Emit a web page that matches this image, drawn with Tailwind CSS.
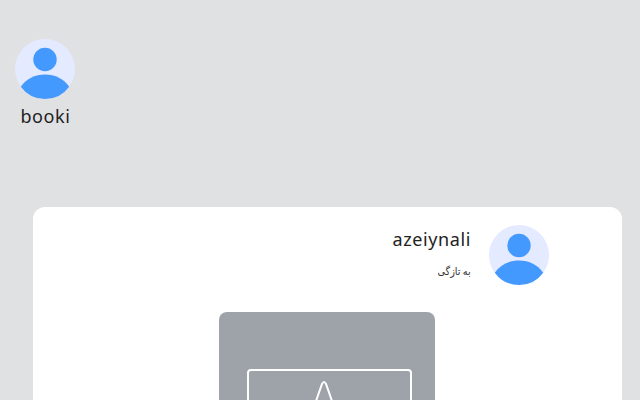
<!DOCTYPE html>
<html lang="fa">
<head>
<meta charset="utf-8">
<script src="https://cdn.jsdelivr.net/npm/@tailwindcss/browser@4"></script>
</head>
<body class="m-0 h-[400px] w-[640px] overflow-hidden bg-[#e0e1e3] font-['Noto_Sans','DejaVu_Sans',sans-serif] text-[#222]">
<div class="flex h-[207px] flex-col items-start pl-[15px] pt-[39px]">
  <div class="flex w-[60px] flex-col items-center">
    <svg class="size-[60px] shrink-0" viewBox="0 0 60 60"><circle cx="30" cy="30" r="30" fill="#e4eaff"/><circle cx="30" cy="20.5" r="11.7" fill="#4499ff"/><path d="M5.8 47.7C11 40 20 35.5 30 35.5S49 40 54.2 47.7A30 30 0 0 1 30 60A30 30 0 0 1 5.8 47.7Z" fill="#4499ff"/></svg>
    <span class="mt-[3px] ml-[1px] whitespace-nowrap text-[18px] leading-[28px] tracking-[0.6px]">booki</span>
  </div>
</div>
<div class="ml-[33px] h-[300px] w-[589px] overflow-hidden rounded-t-[12px] bg-white pt-[18px]">
  <div class="flex items-start justify-end pr-[73px]">
    <div class="mr-[18px] flex flex-col items-end">
      <span class="text-[18px] leading-[28px] whitespace-nowrap tracking-[0.6px]">azeiynali</span>
      <span dir="rtl" class="mt-[11px] origin-right scale-x-[.88] font-['DejaVu_Sans',sans-serif] text-[11px] leading-[16px] text-[#333] whitespace-nowrap [word-spacing:-1px]">به تازگی</span>
    </div>
    <svg class="size-[60px] shrink-0" viewBox="0 0 60 60"><circle cx="30" cy="30" r="30" fill="#e4eaff"/><circle cx="30" cy="20.5" r="11.7" fill="#4499ff"/><path d="M5.8 47.7C11 40 20 35.5 30 35.5S49 40 54.2 47.7A30 30 0 0 1 30 60A30 30 0 0 1 5.8 47.7Z" fill="#4499ff"/></svg>
  </div>
  <div class="ml-[186px] mt-[27px] w-[216px] h-[200px] rounded-[8px] bg-[#9ea2a9] pl-[28px] pt-[57px]">
    <div class="relative h-[120px] w-[165px] rounded-[4px] border-2 border-white">
      <svg class="absolute left-[45px] top-[7px]" width="60" height="60" viewBox="0 0 60 60"><path d="M9 60 L28 6 Q30 2 32 6 L51 60" fill="none" stroke="#fff" stroke-width="2"/></svg>
    </div>
  </div>
</div>
</body>
</html>
